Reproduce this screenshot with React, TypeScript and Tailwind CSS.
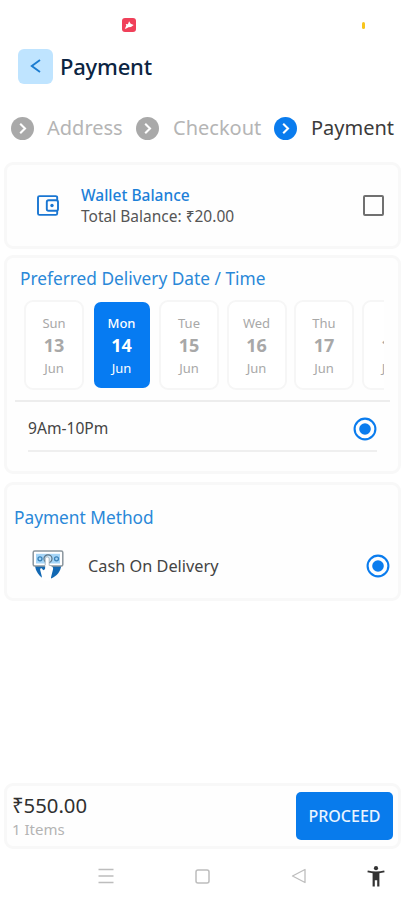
import React, { useState } from "react";
import clsx from "clsx";

interface DeliveryDate {
  day: string;
  date: number;
  month: string;
}

const dates: DeliveryDate[] = [
  { day: "Sun", date: 13, month: "Jun" },
  { day: "Mon", date: 14, month: "Jun" },
  { day: "Tue", date: 15, month: "Jun" },
  { day: "Wed", date: 16, month: "Jun" },
  { day: "Thu", date: 17, month: "Jun" },
  { day: "Fri", date: 18, month: "Jun" },
];

const StatusBar = () => (
  <div className="h-12 flex pt-[18px] pl-[122px]">
    <svg className="w-[14px] h-[14px]" viewBox="0 0 14 14">
      <rect width="14" height="14" rx="3" fill="#f0405a" />
      <path d="M2.8 11l1.5-3.4-.6-1.5 2.2.1 1.2-2.9 1.6 2.4 3 1.4-2.7 1.9-2.6.2-1.6 1z" fill="#fff" />
    </svg>
    <div className="w-[3px] h-[7px] mt-[4px] ml-[226px] rounded-sm bg-[#f8c51c]" />
  </div>
);

const StepIcon = ({ active }: { active?: boolean }) => (
  <svg className="w-[23px] h-[23px] shrink-0" viewBox="0 0 23 23" fill="none">
    <circle cx="11.5" cy="11.5" r="11.5" fill={active ? "#0a7cee" : "#a9a9a9"} />
    <path d="M9.2 6.8l4.8 4.7-4.8 4.7" stroke="#fff" strokeWidth="2.1" />
  </svg>
);

const Radio = () => (
  <svg className="w-6 h-6 shrink-0" viewBox="0 0 24 24" fill="none">
    <circle cx="12" cy="12" r="10.4" stroke="#0a7cee" strokeWidth="2.1" />
    <circle cx="12" cy="12" r="5.8" fill="#0a7cee" />
  </svg>
);

const WalletIcon = () => (
  <svg className="w-[22px] h-[21px] shrink-0" viewBox="0 0 22 21" fill="none" stroke="#1976d2" strokeWidth="1.9">
    <path d="M20.2 5.2V2.6c0-.9-.6-1.5-1.5-1.5H2.5C1.6 1.1 1 1.7 1 2.6v15.8c0 .9.6 1.5 1.5 1.5h16.2c.9 0 1.5-.6 1.5-1.5v-2.7" />
    <rect x="9.8" y="5.3" width="11.2" height="10.4" rx="1.8" />
    <circle cx="15" cy="10.5" r="1.7" fill="#1976d2" stroke="none" />
  </svg>
);

const CashIcon = () => (
  <svg className="w-8 h-[31px] shrink-0" viewBox="0 0 32 31" fill="none">
    {/* sleeves */}
    <path d="M3 16c.8 5 3.5 9.500 8 12.500L14 16z" fill="#1268b3" />
    <path d="M29.2 16c-.8 5.500-4.200 10-10.200 12.500L18 16z" fill="#1268b3" />
    {/* note */}
    <rect x="1.2" y="1" width="29.6" height="15" rx="1.5" fill="#fff" stroke="#8b969e" strokeWidth="1.5" />
    <rect x="4" y="3.8" width="24" height="9.7" fill="#a5d5f7" />
    <circle cx="8" cy="8.8" r="2" stroke="#3981b8" strokeWidth="1.3" />
    <circle cx="24.5" cy="8.8" r="2" stroke="#3981b8" strokeWidth="1.3" />
    <circle cx="16" cy="8.8" r="4" fill="#c9e6fb" stroke="#5b7486" strokeWidth="1.2" />
    {/* hand */}
    <path
      d="M13.2 9c0-2.800 4-2.800 4 0v6.500l2.600.9c1.200.5 1.500 1.600 1.200 3L19.600 25l-1.300 5.500H10.300L9.700 26l-1.500-6c-.3-1.500 1-2.200 1.900-1.200l1.200 1.400 1.900-1.200z"
      fill="#fff"
    />
    <path d="M13.2 15V9c0-2.800 4-2.800 4 0v6.500" stroke="#9aa9b3" strokeWidth=".8" />
  </svg>
);

const Card = ({ className, children }: { className?: string; children: React.ReactNode }) => (
  <section className={clsx("ml-[4px] mr-[3px] border-[3px] border-[#f8f8f8] rounded-[9px] bg-[#fefefe]", className)}>
    {children}
  </section>
);

const NavBar = () => (
  <nav className="h-[51px] flex items-center pl-[98px] pt-[3px] text-[#bdbdbd]">
    <svg className="w-4 h-4" viewBox="0 0 16 16" stroke="currentColor" strokeWidth="1.5">
      <path d="M.5 1.5h15M.5 8h15M.5 14.5h15" />
    </svg>
    <svg className="w-[15px] h-[15px] ml-[81px]" viewBox="0 0 15 15" fill="none" stroke="currentColor" strokeWidth="1.5">
      <rect x="1" y="1" width="13" height="13" rx="2" />
    </svg>
    <svg className="w-[16px] h-[16px] ml-[81px]" viewBox="0 0 16 16" fill="none" stroke="currentColor" strokeWidth="1.3">
      <path d="M1.5 8L14 1.5v13z" strokeLinejoin="round" />
    </svg>
    <svg className="w-[18px] h-[21px] ml-[60px]" viewBox="0 0 18 21" fill="#333">
      <circle cx="9" cy="2.2" r="2.1" />
      <path d="M.8 4.4C6 5.9 12 5.9 17.2 4.4l.4 1.9c-1.8.5-3.500.8-5.200 1V20.500h-2.200v-6.300H7.800v6.300H5.600V7.300c-1.700-.2-3.400-.5-5.200-1z" />
    </svg>
  </nav>
);

export default function App() {
  const [selected, setSelected] = useState(14);
  const [useWallet, setUseWallet] = useState(false);

  return (
    <div className="w-[404px] h-[900px] flex flex-col overflow-hidden bg-white whitespace-nowrap font-['Noto_Sans','Open_Sans',sans-serif]">
      <StatusBar />

      <header className="h-[36px] flex items-center pl-[18px]">
        <button className="w-[35px] h-[35px] rounded-[6px] bg-[#bfe4ff] flex items-center justify-center" aria-label="Back">
          <svg className="w-[11px] h-[14px]" viewBox="0 0 11 14" fill="none" stroke="#1c7cd0" strokeWidth="1.9">
            <path d="M10 1L1.8 7l8.2 6" />
          </svg>
        </button>
        <h1 className="ml-[7px] text-[22px] leading-none font-medium tracking-[-0.2px] text-[#0b2442]">Payment</h1>
      </header>

      <div className="h-[78px] flex items-center pt-[10px] pl-[11px] text-[20px] leading-none text-[#b5b5b5]">
        <StepIcon />
        <span className="w-[102px] pl-[13px]">Address</span>
        <StepIcon />
        <span className="w-[115px] pl-[14px]">Checkout</span>
        <StepIcon active />
        <span className="pl-[14px] text-[#3b3b3b]">Payment</span>
      </div>

      <Card className="h-[87px] flex items-center pl-[30px] pr-[14px]">
        <WalletIcon />
        <div className="ml-[22px] flex-1 text-[15.5px] leading-[21px]">
          <div className="font-medium text-[#1c80d8]">Wallet Balance</div>
          <div className="text-[#555]">Total Balance: ₹20.00</div>
        </div>
        <button
          className="w-[21px] h-[21px] border-2 border-[#707070] rounded-[2px]"
          onClick={() => setUseWallet(!useWallet)}
          aria-label="Use wallet balance"
        />
      </Card>

      <Card className="h-[219px] mt-[6px]">
        <h2 className="h-[42px] pl-[13px] pt-[11px] text-[17.3px] leading-[20px] text-[#2a88d8]">
          Preferred Delivery Date / Time
        </h2>
        <div className="ml-[17px] w-[360px] flex gap-[7.5px] overflow-hidden">
          {dates.map((d) => (
            <button
              key={d.date}
              onClick={() => setSelected(d.date)}
              className={clsx(
                "w-[60px] h-[90px] shrink-0 rounded-[9px] bg-clip-padding border-2 flex flex-col items-center pt-[12px]",
                d.date === selected
                  ? "border-transparent bg-[#067bf2] text-white"
                  : "border-[#f6f6f6] bg-white text-[#a8a8a8]"
              )}
            >
              <span className={clsx("text-[13px] leading-[18px]", d.date === selected && "font-medium")}>{d.day}</span>
              <span className="text-[18px] leading-[27px] font-bold">{d.date}</span>
              <span className="text-[13px] leading-[18px]">{d.month}</span>
            </button>
          ))}
        </div>
        <div className="mt-[10px] mx-[8px] h-[2px] bg-[#ededed]" />
        <div className="h-[48px] mx-[21px] pt-[6px] flex items-center justify-between text-[15.6px] text-[#444]">
          <span>9Am-10Pm</span>
          <Radio />
        </div>
        <div className="mx-[21px] h-[2px] bg-[#efefef]" />
      </Card>

      <Card className="h-[119px] mt-[8px]">
        <h2 className="pl-[7px] pt-[23px] text-[17.3px] leading-[20px] text-[#2a88d8]">Payment Method</h2>
        <div className="mt-[22px] pl-[25px] pr-[8px] flex items-center">
          <CashIcon />
          <span className="ml-[24px] flex-1 text-[16.3px] leading-[24px] text-[#444]">Cash On Delivery</span>
          <Radio />
        </div>
      </Card>

      <Card className="h-[66px] mt-auto flex items-center justify-between px-[5px]">
        <div>
          <div className="text-[20.3px] leading-[25px] text-[#303030]">₹550.00</div>
          <div className="text-[15px] leading-[22px] text-[#b4b4b4]">1 Items</div>
        </div>
        <button className="w-[97px] h-[48px] rounded-[5px] bg-[#087bec] text-[16px] font-medium text-[#eaf4ff]">
          PROCEED
        </button>
      </Card>
      <NavBar />
    </div>
  );
}
